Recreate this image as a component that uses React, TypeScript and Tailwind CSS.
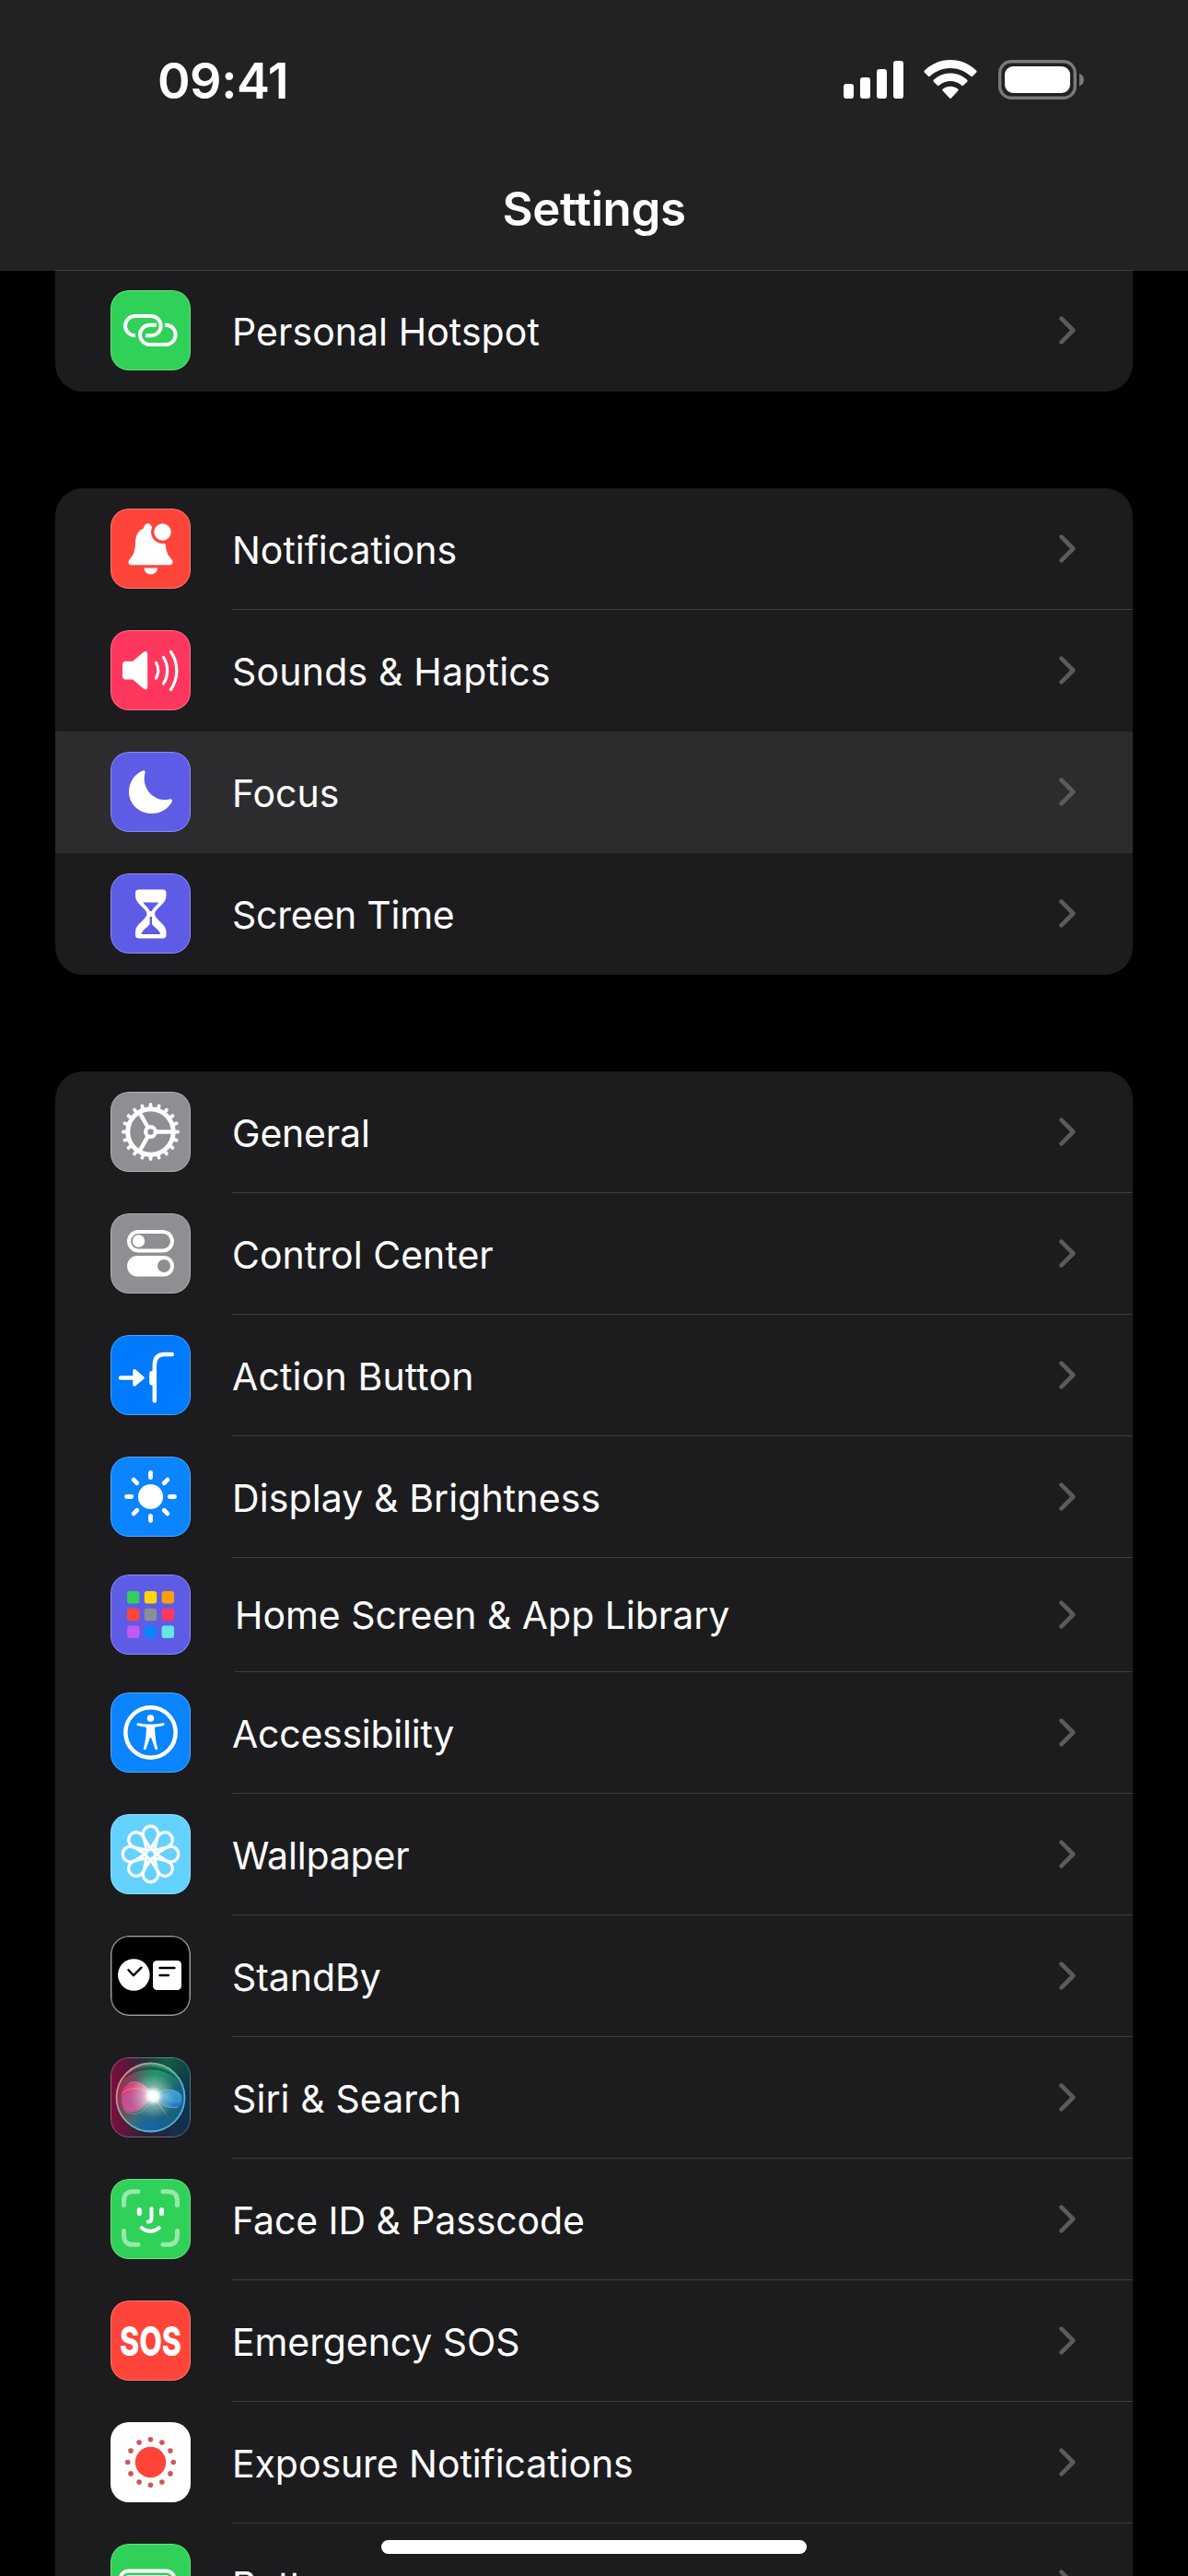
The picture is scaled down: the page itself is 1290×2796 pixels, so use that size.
import { ReactNode } from "react";

type SettingsItem = {
  label: string;
  icon: ReactNode;
  tile: string;
  tracking?: string;
  active?: boolean;
  compact?: boolean;
};

const TAU = Math.PI * 2;

function polar(cx: number, cy: number, r: number, angle: number) {
  return [cx + r * Math.cos(angle), cy + r * Math.sin(angle)];
}

function Glyph({ children }: { children: ReactNode }) {
  return (
    <svg viewBox="0 0 87 87" className="block h-full w-full" fill="none" strokeLinecap="round" strokeLinejoin="round">
      {children}
    </svg>
  );
}

function HotspotIcon() {
  return (
    <Glyph>
      <g stroke="#fff" strokeWidth="4" strokeLinecap="butt">
        <path d="M27 49.300h-.3a10.650 10.650 0 0 1 0-21.300H44a10.650 10.650 0 0 1 0 21.300h-6" />
        <path d="M50 37.700h-7.300a10.650 10.650 0 0 0 0 21.300H60a10.650 10.650 0 0 0 0-21.300h-.8" />
      </g>
    </Glyph>
  );
}

function NotificationsIcon() {
  return (
    <Glyph>
      <path
        d="M42 16c-4.500 0-5.500 3-6 5.500C30 24 27.500 29 27 36c-.400 9-1 13-5.500 18-1.500 1.700-2.500 3.500-1.800 5.500.500 1.300 1.500 1.700 3 1.700h41.600c1.500 0 2.500-.400 3-1.700.700-2-.300-3.800-1.800-5.500-4-4.500-5-8-5.500-14.500Z"
        fill="#fff"
      />
      <circle cx="56.500" cy="25.500" r="12.500" fill="#ff453a" />
      <circle cx="56.500" cy="25.500" r="9.200" fill="#fff" />
      <path d="M36.500 64.500h14.500c0 4-3.200 6.800-7.200 6.800s-7.300-2.800-7.300-6.800Z" fill="#fff" />
    </Glyph>
  );
}

function SoundsIcon() {
  return (
    <Glyph>
      <path
        d="M13 37.500c0-2.500 1.200-3.700 3.700-3.700h7.500L35.500 24c2.400-2 4.700-1.200 4.700 1.800v35.600c0 3-2.300 3.800-4.700 1.800L24.200 53.500h-7.500c-2.500 0-3.700-1.200-3.700-3.700Z"
        fill="#fff"
      />
      <g stroke="#fff" strokeWidth="3.200">
        <path d="M49.500 35.500c2.800 5 2.800 11.500 0 16.500" />
        <path d="M57.500 29.500c5.500 8.500 5.500 20 0 28.500" />
        <path d="M65.500 23.500c8.500 12.500 8.500 28.500 0 41" />
      </g>
    </Glyph>
  );
}

function FocusIcon() {
  return (
    <Glyph>
      <path
        d="M35 20.400c1.800-.800 3.200.400 2.500 2.600-4.500 16 9.500 32.500 26.500 28.500 2.300-.600 3.500.800 2.700 2.700C62.500 62 54.500 67 45 67 31 67 20 56.500 20 43.500 20 33 26 24 35 20.400Z"
        fill="#fff"
      />
    </Glyph>
  );
}

function ScreenTimeIcon() {
  return (
    <Glyph>
      <path
        d="M30.500 17.500h26.500c2.200 0 3.500 1.300 3.500 3.500v3.500c0 9-12.500 13.500-12.500 19.500s12.500 10.500 12.500 19.500V67c0 2.200-1.300 3.500-3.500 3.500H30.500c-2.200 0-3.500-1.300-3.500-3.500v-3.500C27 54.500 39.500 50 39.500 44S27 33.500 27 24.500V21c0-2.200 1.300-3.500 3.500-3.500Z"
        fill="#fff"
      />
      <path d="M35.200 31.500h17.200c-2.400 3.500-6.400 6-7.600 9.500h-2c-1.200-3.500-5.200-6-7.600-9.500Z" fill="#5e5ce6" />
      <path d="M42.600 47h2.400v8c2 3.500 7.500 5.500 9.200 11H33.400c1.700-5.500 7.200-7.500 9.200-11Z" fill="#5e5ce6" />
    </Glyph>
  );
}

function GeneralIcon() {
  const teeth = Array.from({ length: 20 }, (_, i) => (i / 20) * TAU);
  const spokes = [0, TAU / 3, (TAU * 2) / 3];

  return (
    <Glyph>
      <circle cx="43.500" cy="43.500" r="24.700" stroke="#fff" strokeWidth="5" />
      {teeth.map((angle) => {
        const [x1, y1] = polar(43.5, 43.5, 26.5, angle);
        const [x2, y2] = polar(43.5, 43.5, 29.6, angle);
        return <line key={angle} x1={x1} y1={y1} x2={x2} y2={y2} stroke="#fff" strokeWidth="3.800" />;
      })}
      {spokes.map((angle) => {
        const [x1, y1] = polar(43.5, 43.5, 6, angle);
        const [x2, y2] = polar(43.5, 43.5, 24, angle);
        return <line key={angle} x1={x1} y1={y1} x2={x2} y2={y2} stroke="#fff" strokeWidth="4.400" />;
      })}
      <circle cx="43.500" cy="43.500" r="5.300" stroke="#fff" strokeWidth="4.200" />
    </Glyph>
  );
}

function ControlCenterIcon() {
  return (
    <Glyph>
      <rect x="20" y="20" width="47" height="20.500" rx="10.250" stroke="#fff" strokeWidth="4" />
      <circle cx="30.500" cy="30" r="6.700" fill="#fff" />
      <rect x="18" y="46" width="51" height="22.500" rx="11.250" fill="#fff" />
      <circle cx="58" cy="57" r="7" fill="#8e8e93" />
    </Glyph>
  );
}

function ActionButtonIcon() {
  return (
    <Glyph>
      <path d="M11 46.500h16" stroke="#fff" strokeWidth="4.500" />
      <path d="M26 38.800 35 46.500 26 54Z" fill="#fff" stroke="#fff" strokeWidth="3.500" />
      <path d="M47.800 71.500V32.500c0-8 4-11.500 11-11.500h8" stroke="#fff" strokeWidth="4.500" />
      <rect x="42.200" y="39" width="7" height="15.500" rx="2.800" fill="#fff" />
    </Glyph>
  );
}

function DisplayIcon() {
  const rays = Array.from({ length: 8 }, (_, i) => (i / 8) * TAU);

  return (
    <Glyph>
      <circle cx="43.500" cy="43.500" r="13.600" fill="#fff" />
      {rays.map((angle) => {
        const [x1, y1] = polar(43.5, 43.5, 20.8, angle);
        const [x2, y2] = polar(43.5, 43.5, 26, angle);
        return <line key={angle} x1={x1} y1={y1} x2={x2} y2={y2} stroke="#fff" strokeWidth="4.800" />;
      })}
    </Glyph>
  );
}

function HomeScreenIcon() {
  const colors = ["#30d158", "#ffd60a", "#ff9f0a", "#ff453a", "#8e8e93", "#ff375f", "#bf5af2", "#0a84ff", "#63e6e2"];

  return (
    <Glyph>
      {colors.map((color, i) => (
        <rect
          key={color}
          x={18 + (i % 3) * 18.8}
          y={18 + Math.floor(i / 3) * 18.8}
          width="13.400"
          height="13.400"
          rx="3"
          fill={color}
        />
      ))}
    </Glyph>
  );
}

function AccessibilityIcon() {
  return (
    <Glyph>
      <circle cx="43.500" cy="43.500" r="27.200" stroke="#fff" strokeWidth="4.500" />
      <circle cx="43.500" cy="28" r="3.800" fill="#fff" />
      <path
        d="M30 33.300c4.500.900 9 1.200 13.500 1.200s9-.300 13.500-1.200c1.800-.300 2.200 2.200.500 2.600-3 .800-5.800 1.200-8.300 1.600-.9.200-1.200.8-1.100 1.900.2 8 1.300 15 3 21.100.5 1.800-1.900 2.600-2.700.8L44.300 49.500c-.3-.8-1.300-.8-1.600 0l-4.100 11.800c-.8 1.800-3.200 1-2.700-.8 1.700-6.100 2.800-13.100 3-21.100.1-1.100-.2-1.700-1.100-1.900-2.500-.4-5.300-.8-8.300-1.600-1.700-.4-1.300-2.900.5-2.600Z"
        fill="#fff"
      />
    </Glyph>
  );
}

function WallpaperIcon() {
  return (
    <Glyph>
      {[0, 45, 90, 135, 180, 225, 270, 315].map((angle) => (
        <path
          key={angle}
          d="M39.500 40.500 35.900 24.500a8.200 8.200 0 1 1 15.200 0L47.500 40.500"
          stroke="#fff"
          strokeWidth="3.200"
          transform={`rotate(${angle} 43.500 43.500)`}
        />
      ))}
      <circle cx="43.500" cy="43.500" r="4.800" stroke="#fff" strokeWidth="2.800" />
    </Glyph>
  );
}

function StandByIcon() {
  return (
    <Glyph>
      <circle cx="25.300" cy="42.500" r="17.300" fill="#fff" />
      <path d="m19.500 37.200 5.500 6 8.500-8.500" stroke="#000" strokeWidth="2.400" />
      <rect x="46" y="27" width="31" height="32" rx="4.500" fill="#fff" />
      <path d="M53.500 35h16M53.500 43h9.500" stroke="#000" strokeWidth="2.400" />
      <rect x=".8" y=".8" width="85.400" height="85.400" rx="19.200" stroke="#77777b" strokeWidth="1.600" />
    </Glyph>
  );
}

function SiriIcon() {
  return (
    <Glyph>
      <defs>
        <linearGradient id="siri-base" x1="0" y1="0" x2="87" y2="0" gradientUnits="userSpaceOnUse">
          <stop offset="0" stopColor="#7c0f3e" />
          <stop offset=".45" stopColor="#2b2138" />
          <stop offset="1" stopColor="#0b3450" />
        </linearGradient>
        <radialGradient id="siri-green" cx="62" cy="4" r="44" gradientUnits="userSpaceOnUse">
          <stop offset="0" stopColor="#0f6148" />
          <stop offset="1" stopColor="#0d4538" stopOpacity="0" />
        </radialGradient>
        <linearGradient id="siri-orb" x1="6" y1="30" x2="80" y2="56" gradientUnits="userSpaceOnUse">
          <stop offset="0" stopColor="#a02650" />
          <stop offset=".42" stopColor="#47706b" />
          <stop offset=".75" stopColor="#1f6470" />
          <stop offset="1" stopColor="#155f8c" />
        </linearGradient>
        <radialGradient id="siri-top" cx="52" cy="14" r="30" gradientUnits="userSpaceOnUse">
          <stop offset="0" stopColor="#1f9a6c" />
          <stop offset="1" stopColor="#178a66" stopOpacity="0" />
        </radialGradient>
        <radialGradient id="siri-bottom" cx="42" cy="80" r="28" gradientUnits="userSpaceOnUse">
          <stop offset="0" stopColor="#1068b4" />
          <stop offset="1" stopColor="#0f62ac" stopOpacity="0" />
        </radialGradient>
        <linearGradient id="siri-ring" x1="10" y1="20" x2="74" y2="70" gradientUnits="userSpaceOnUse">
          <stop offset="0" stopColor="#ee7f8f" />
          <stop offset=".45" stopColor="#6db9a5" />
          <stop offset="1" stopColor="#4fb0e0" />
        </linearGradient>
        <linearGradient id="siri-pink" x1="13" y1="40" x2="46" y2="44" gradientUnits="userSpaceOnUse">
          <stop offset="0" stopColor="#d93a78" />
          <stop offset=".6" stopColor="#ee5f90" />
          <stop offset="1" stopColor="#ffd5e2" />
        </linearGradient>
        <radialGradient id="siri-glow" cx="46.500" cy="42" r="25" gradientUnits="userSpaceOnUse">
          <stop offset="0" stopColor="#fff" />
          <stop offset=".22" stopColor="#fff" stopOpacity=".95" />
          <stop offset=".42" stopColor="#e4fff6" stopOpacity=".45" />
          <stop offset="1" stopColor="#a8e8d4" stopOpacity="0" />
        </radialGradient>
      </defs>
      <rect width="87" height="87" fill="url(#siri-base)" />
      <rect width="87" height="87" fill="url(#siri-green)" />
      <circle cx="43.500" cy="43.500" r="37" fill="url(#siri-orb)" />
      <circle cx="43.500" cy="43.500" r="37" fill="url(#siri-top)" />
      <circle cx="43.500" cy="43.500" r="37" fill="url(#siri-bottom)" />
      <path d="M12 26C22 7 58 3 74 26 60 10 28 9 12 26Z" fill="#0a3a30" opacity=".55" />
      <path d="M47 42C40 30 28 24 19 29 9 35 9 52 17 58c11 5 20-6 30-16Z" fill="url(#siri-pink)" opacity=".9" />
      <path d="M47 42C34 36 20 36 13 43c-2 9 4 19 14 17 9-2 13-11 20-18Z" fill="#b35fa6" opacity=".55" />
      <path d="M47 42c10-4 17-9 25-6 8 4 8 16 0 19-9 2-16-7-25-13Z" fill="#2a7dd2" opacity=".85" />
      <path d="M54 42c6-3 12-6 17-5 7 2 8 9 4 12-8 3-14-3-21-7Z" fill="#45bfd0" opacity=".4" />
      <path d="M46 40 64 67 47 44Z" fill="#ffc2d0" opacity=".65" />
      <g strokeWidth=".8" opacity=".55">
        <path d="M13 39c8-8 24-7 34 3M20 28c10-5 20 4 27 14" stroke="#ffc0d8" />
        <path d="M47 42c8-9 22-9 28-1M47 42c6 9 18 15 26 12" stroke="#a5f0ff" />
        <path d="M14 56c10 12 25 4 33-14" stroke="#8fcdf5" />
      </g>
      <circle cx="46.500" cy="42" r="25" fill="url(#siri-glow)" />
      <circle cx="43.500" cy="43.500" r="37" stroke="url(#siri-ring)" strokeWidth="1.800" />
    </Glyph>
  );
}

function FaceIdIcon() {
  return (
    <Glyph>
      <path
        d="M14.500 28.500v-5c0-6 3.500-9.800 9.500-9.800h6M57 13.700h6c6 0 9.500 3.800 9.500 9.800v5M72.500 56.500v5c0 6-3.500 9.800-9.500 9.800h-6M30 71.300h-6c-6 0-9.500-3.800-9.500-9.800v-5"
        stroke="#98e8ac"
        strokeWidth="5"
      />
      <g stroke="#fff">
        <path d="M31.300 33.500v4M55.500 33.500v4" strokeWidth="5" />
        <path d="M44.500 32v11c0 2.500-1.200 3.600-3.800 3.600" strokeWidth="4" />
        <path d="M33.800 53c5.500 5 13.500 5 19 0" strokeWidth="4" />
      </g>
    </Glyph>
  );
}

function SosIcon() {
  return (
    <Glyph>
      <text
        x="43.500"
        y="59.500"
        textAnchor="middle"
        textLength="67"
        lengthAdjust="spacingAndGlyphs"
        fill="#fff"
        fontFamily="Inter, sans-serif"
        fontSize="44"
        fontWeight="800"
      >
        SOS
      </text>
    </Glyph>
  );
}

function ExposureIcon() {
  const dots = Array.from({ length: 12 }, (_, i) => (i / 12) * TAU);

  return (
    <Glyph>
      <circle cx="43.500" cy="43.500" r="16.700" fill="#ff453a" />
      {dots.map((angle) => {
        const [cx, cy] = polar(43.5, 43.5, 24.8, angle);
        return <circle key={angle} cx={cx} cy={cy} r="2.800" fill="#d1555a" />;
      })}
    </Glyph>
  );
}

function BatteryTileIcon() {
  return (
    <Glyph>
      <rect x="11" y="29.500" width="58" height="29" rx="8" stroke="#fff" strokeWidth="4" />
      <rect x="15.500" y="34" width="49" height="20" rx="4" fill="#fff" />
    </Glyph>
  );
}

const connectivity: SettingsItem[] = [
  { label: "Personal Hotspot", icon: <HotspotIcon />, tile: "bg-[#30d158]", tracking: "tracking-[0.05px]" },
];

const alerts: SettingsItem[] = [
  { label: "Notifications", icon: <NotificationsIcon />, tile: "bg-[#ff453a]" },
  { label: "Sounds & Haptics", icon: <SoundsIcon />, tile: "bg-[#ff375f]", tracking: "tracking-[0.2px]" },
  { label: "Focus", icon: <FocusIcon />, tile: "bg-[#5e5ce6]", active: true },
  { label: "Screen Time", icon: <ScreenTimeIcon />, tile: "bg-[#5e5ce6]", tracking: "tracking-[-0.25px]" },
];

const device: SettingsItem[] = [
  { label: "General", icon: <GeneralIcon />, tile: "bg-[#8e8e93]", tracking: "tracking-[-0.2px]" },
  { label: "Control Center", icon: <ControlCenterIcon />, tile: "bg-[#8e8e93]", tracking: "tracking-[0.03px]" },
  { label: "Action Button", icon: <ActionButtonIcon />, tile: "bg-[#007aff]", tracking: "tracking-[0.15px]" },
  { label: "Display & Brightness", icon: <DisplayIcon />, tile: "bg-[#0a84ff]", tracking: "tracking-[0.1px]" },
  { label: "Home Screen & App Library", icon: <HomeScreenIcon />, tile: "bg-[#5e5ce6]", compact: true },
  { label: "Accessibility", icon: <AccessibilityIcon />, tile: "bg-[#0a84ff]", tracking: "tracking-[-0.25px]" },
  { label: "Wallpaper", icon: <WallpaperIcon />, tile: "bg-[#64d2ff]", tracking: "tracking-[-0.2px]" },
  { label: "StandBy", icon: <StandByIcon />, tile: "bg-black" },
  { label: "Siri & Search", icon: <SiriIcon />, tile: "bg-[#14263a]", tracking: "tracking-[0.1px]" },
  { label: "Face ID & Passcode", icon: <FaceIdIcon />, tile: "bg-[#30d158]", tracking: "tracking-[-0.1px]" },
  { label: "Emergency SOS", icon: <SosIcon />, tile: "bg-[#ff453a]", tracking: "tracking-[-0.1px]" },
  { label: "Exposure Notifications", icon: <ExposureIcon />, tile: "bg-white", tracking: "tracking-[-0.08px]" },
  { label: "Battery", icon: <BatteryTileIcon />, tile: "bg-[#30d158]" },
];

function StatusBar() {
  return (
    <div className="flex h-[172px] shrink-0 items-start justify-between pl-[171px] pr-[112px]">
      <span className="mt-[55px] text-[54px] font-semibold leading-[65px] tracking-[-0.5px]">09:41</span>
      <div className="mt-[65px] flex h-[43px] items-start">
        <svg viewBox="0 0 65 43" className="h-[43px] w-[65px]" fill="#fff">
          <rect x="0" y="26" width="11" height="16" rx="3" />
          <rect x="18" y="19" width="11" height="23" rx="3" />
          <rect x="36" y="10" width="11" height="32" rx="3" />
          <rect x="54" y="1" width="11" height="41" rx="3" />
        </svg>
        <svg viewBox="0 0 58 43" className="ml-[22px] h-[43px] w-[58px]" fill="#fff">
          <path d="M1 11.500C16.500-3.800 41.500-3.800 57 11.500c.800.800.800 1.500 0 2.300l-3.700 3.800c-.800.800-1.500.800-2.300 0-12.200-11.600-31.800-11.600-44 0-.800.800-1.500.800-2.300 0L1 13.800c-.800-.800-.800-1.500 0-2.300Z" />
          <path d="M11 21.500c10-9.500 26-9.500 36 0 .900.800.900 1.600 0 2.400l-3.700 3.700c-.800.800-1.500.700-2.300 0-7-6-17-6-24 0-.800.700-1.500.800-2.300 0L11 23.900c-.900-.800-.900-1.600 0-2.400Z" />
          <path d="M21 31.500c4.700-3.700 11.300-3.700 16 0 .900.700.900 1.500.1 2.300l-7 7.500c-.800.900-1.400.900-2.200 0l-7-7.500c-.800-.800-.800-1.600.1-2.300Z" />
        </svg>
        <svg viewBox="0 0 94 43" className="ml-[23px] h-[43px] w-[94px]">
          <rect x="1.700" y="1.700" width="81.600" height="39.600" rx="12.500" fill="none" stroke="#7a7a7a" strokeWidth="3.400" />
          <rect x="7" y="7" width="71" height="29" rx="9" fill="#fff" />
          <path d="M88 15c3.500 1.200 5 3.600 5 6.700s-1.500 5.500-5 6.700Z" fill="#7a7a7a" />
        </svg>
      </div>
    </div>
  );
}

function SettingsRow({ item, divider }: { item: SettingsItem; divider: boolean }) {
  return (
    <div
      className={[
        "flex shrink-0 items-start pl-[60px]",
        item.compact ? "h-[124px]" : "h-[132px]",
        item.active ? "bg-[#2c2c2e]" : "",
      ].join(" ")}
    >
      <div
        className={[
          "relative size-[87px] shrink-0 overflow-hidden rounded-[20px]",
          item.compact ? "mt-[18px]" : "mt-[22px]",
          item.tile,
        ].join(" ")}
      >
        {item.icon}
        <div className="absolute inset-0 rounded-[20px] border border-white/30" />
      </div>
      <div
        className={[
          "flex h-full flex-1 items-center justify-between border-b pr-[62px]",
          item.compact ? "ml-12" : "ml-[45px]",
          divider ? "border-[#3d3d41]" : "border-transparent",
        ].join(" ")}
      >
        <span
          className={[
            "whitespace-nowrap text-[41px] leading-[50px]",
            item.compact ? "" : "pt-[3px]",
            item.tracking ?? "tracking-[-0.04px]",
          ].join(" ")}
        >
          {item.label}
        </span>
        <svg viewBox="0 0 18 31" className="h-[31px] w-[18px]" fill="none">
          <path d="m2.500 2.700 12.800 12.800L2.500 28.300" stroke="#5b5b5f" strokeWidth="4.600" strokeLinecap="round" strokeLinejoin="round" />
        </svg>
      </div>
    </div>
  );
}

function SettingsGroup({ items, className }: { items: SettingsItem[]; className: string }) {
  return (
    <section className={`mx-[60px] flex shrink-0 flex-col overflow-hidden bg-[#1c1c1e] ${className}`}>
      {items.map((item, i) => (
        <SettingsRow
          key={item.label}
          item={item}
          divider={i < items.length - 1 && !item.active && !items[i + 1].active}
        />
      ))}
    </section>
  );
}

export default function App() {
  return (
    <div className="relative flex h-[2796px] w-[1290px] flex-col overflow-hidden bg-black font-['Inter',sans-serif] text-white">
      <header className="z-10 flex h-[294px] shrink-0 flex-col bg-[#222222]">
        <StatusBar />
        <h1 className="pt-[25px] text-center text-[51px] font-semibold leading-[60px] tracking-[-0.4px]">Settings</h1>
        <div className="mx-[60px] mt-auto h-px bg-[#404042]" />
      </header>

      <main className="-mt-px flex flex-col gap-[105px]">
        <SettingsGroup items={connectivity} className="rounded-b-[30px]" />
        <SettingsGroup items={alerts} className="rounded-[30px]" />
        <SettingsGroup items={device} className="rounded-t-[30px]" />
      </main>

      <div className="absolute bottom-6 left-[414px] h-[15px] w-[462px] rounded-full bg-white" />
    </div>
  );
}
